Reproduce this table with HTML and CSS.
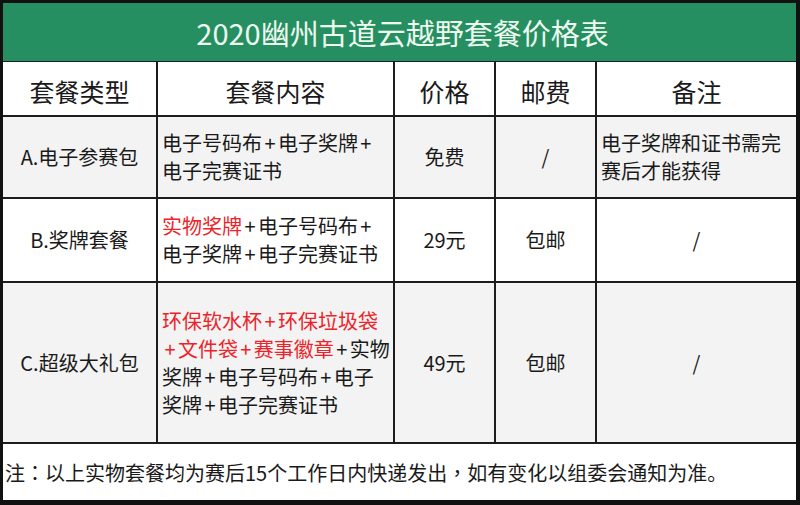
FILE: index.html
```html
<!DOCTYPE html>
<html lang="zh-CN">
<head>
<meta charset="utf-8">
<title>2020幽州古道云越野套餐价格表</title>
<link rel="stylesheet" href="styles.css">
</head>
<body>
<div class="sheet">
  <div class="title">2020幽州古道云越野套餐价格表</div>
  <div class="grid">
    <div class="cell head">套餐类型</div>
    <div class="cell head">套餐内容</div>
    <div class="cell head">价格</div>
    <div class="cell head">邮费</div>
    <div class="cell head">备注</div>

    <div class="cell center gray">A.电子参赛包</div>
    <div class="cell left gray">电子号码布<span class="p">+</span>电子奖牌<span class="p">+</span><br>电子完赛证书</div>
    <div class="cell center gray">免费</div>
    <div class="cell center gray">/</div>
    <div class="cell left gray">电子奖牌和证书需完<br>赛后才能获得</div>

    <div class="cell center">B.奖牌套餐</div>
    <div class="cell left"><span class="red">实物奖牌</span><span class="p">+</span>电子号码布<span class="p">+</span><br>电子奖牌<span class="p">+</span>电子完赛证书</div>
    <div class="cell center">29元</div>
    <div class="cell center">包邮</div>
    <div class="cell center">/</div>

    <div class="cell center gray">C.超级大礼包</div>
    <div class="cell left gray"><span class="red">环保软水杯<span class="p">+</span>环保垃圾袋<br><span class="p">+</span>文件袋<span class="p">+</span>赛事徽章</span><span class="p">+</span>实物<br>奖牌<span class="p">+</span>电子号码布<span class="p">+</span>电子<br>奖牌<span class="p">+</span>电子完赛证书</div>
    <div class="cell center gray">49元</div>
    <div class="cell center gray">包邮</div>
    <div class="cell center gray">/</div>
  </div>
  <div class="footer">注<span class="punct">：</span>以上实物套餐均为赛后15个工作日内快递发出<span class="punct">，</span>如有变化以组委会通知为准。</div>
</div>
</body>
</html>
```

FILE: styles.css
```css
html, body {
  margin: 0;
  padding: 0;
  background: #ffffff;
}

.sheet {
  box-sizing: border-box;
  width: 800px;
  height: 505px;
  border-style: solid;
  border-color: #111111;
  border-width: 3px 4px 5px 3px;
  background: #1c1c1c;
  display: flex;
  flex-direction: column;
  font-family: "Noto Sans CJK SC", "Noto Sans", sans-serif;
  color: #1a1a1a;
}

.title {
  height: 58px;
  margin-bottom: 1px;
  background: #268f61;
  color: #eef9f0;
  font-size: 29px;
  display: flex;
  align-items: center;
  justify-content: center;
  padding-left: 6px;
}

.grid {
  display: grid;
  grid-template-columns: 153px 235px 99px 99px 199px;
  grid-template-rows: 53px 80px 82px 159px;
  gap: 2px;
}

.cell {
  background: #ffffff;
  font-size: 20px;
  line-height: 28px;
  display: flex;
  align-items: center;
}

.cell.gray {
  background: #f3f3f3;
}

.cell.head {
  font-size: 25px;
  justify-content: center;
  padding-top: 4px;
  box-sizing: border-box;
}

.cell.center {
  justify-content: center;
}

.cell.left {
  display: block;
  padding: 0 0 0 4px;
  align-content: center;
  white-space: nowrap;
}

.p {
  margin: 0 0.12em;
}

.red {
  color: #ec2328;
}

.punct {
  font-family: "Noto Sans CJK TC", "Noto Sans CJK SC", sans-serif;
}

.footer {
  margin-top: 2px;
  flex: 1;
  background: #ffffff;
  font-size: 20px;
  display: flex;
  align-items: center;
  padding-left: 2px;
}
```
